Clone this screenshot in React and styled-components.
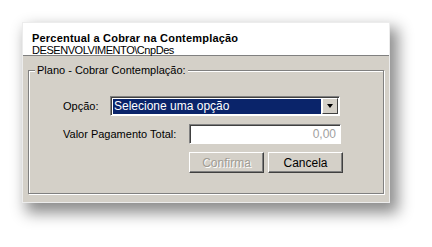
import React from "react";
import styled, { createGlobalStyle } from "styled-components";

const GlobalStyle = createGlobalStyle`
  html, body {
    margin: 0;
    padding: 0;
    background: #ffffff;
    font-family: "Liberation Sans", Arial, sans-serif;
  }
`;

const Page = styled.div`
  width: 432px;
  height: 247px;
  padding: 22px 0 0 22px;
  box-sizing: border-box;
  overflow: hidden;
`;

const Window = styled.div`
  width: 368px;
  height: 181px;
  box-sizing: border-box;
  background: #d4d0c8;
  border: 1px solid #ececec;
  box-shadow: 6px 8px 14px 2px rgba(0, 0, 0, 0.45);
  display: flex;
  flex-direction: column;
`;

const Header = styled.div`
  height: 33px;
  box-sizing: border-box;
  background: #ffffff;
  border-bottom: 1px solid #808080;
  padding: 9px 0 0 9px;
`;

const Title = styled.div`
  font-size: 11px;
  font-weight: bold;
  letter-spacing: 0.2px;
  color: #000;
  line-height: 12px;
`;

const Subtitle = styled.div`
  font-size: 11px;
  letter-spacing: -0.45px;
  color: #000;
  line-height: 12px;
`;

const Body = styled.div`
  flex: 1;
  padding: 8px 5px 8px 5px;
  display: flex;
`;

const Group = styled.fieldset`
  flex: 1;
  margin: 0;
  padding: 20px 0 0 0;
  border: 1px solid #808080;
  box-shadow: inset 1px 1px 0 #ffffff, 1px 1px 0 #ffffff;
  display: flex;
  flex-direction: column;
  gap: 8px;
`;

const Legend = styled.legend`
  font-size: 11px;
  color: #000;
  padding: 0 2px;
  margin-left: 6px;
  background: #d4d0c8;
`;

const Row = styled.div`
  display: flex;
  align-items: center;
  padding-left: ${(p) => 34 + (p.$indent || 0)}px;
  gap: ${(p) => p.$gap || 0}px;
`;

const Label = styled.span`
  width: ${(p) => p.$w}px;
  font-size: 11px;
  color: #000;
`;

const Combo = styled.div`
  width: 230px;
  height: 20px;
  box-sizing: border-box;
  display: flex;
  background: #ffffff;
  border: 1px solid;
  border-color: #808080 #ffffff #ffffff #808080;
  box-shadow: inset 1px 1px 0 #404040;
  padding: 2px 1px 1px 2px;
`;

const ComboText = styled.div`
  flex: 1;
  background: #0a246a;
  color: #ffffff;
  font-size: 12px;
  line-height: 14px;
  padding-left: 1px;
  margin-right: 1px;
`;

const DropButton = styled.div`
  width: 16px;
  box-sizing: border-box;
  margin: -1px 0 0 0;
  background: #d4d0c8;
  border: 1px solid;
  border-color: #ffffff #404040 #404040 #ffffff;
  display: flex;
  align-items: center;
  justify-content: center;
`;

const Arrow = styled.span`
  width: 0;
  height: 0;
  border-left: 3.5px solid transparent;
  border-right: 3.5px solid transparent;
  border-top: 4px solid #000;
`;

const ValueInput = styled.input`
  width: 152px;
  height: 20px;
  box-sizing: border-box;
  margin: 0;
  border: 1px solid;
  border-color: #808080 #ffffff #ffffff #808080;
  box-shadow: inset 1px 1px 0 #404040;
  background: #ffffff;
  color: #a0a0a0;
  font-family: "Liberation Sans", Arial, sans-serif;
  font-size: 12px;
  text-align: right;
  padding: 0 4px 0 0;
  outline: none;
`;

const Button = styled.button`
  width: 75px;
  height: 21px;
  box-sizing: border-box;
  margin: 0;
  padding: 0;
  background: #d4d0c8;
  border: 1px solid;
  border-color: #ffffff #404040 #404040 #ffffff;
  box-shadow: inset -1px -1px 0 #808080;
  font-family: "Liberation Sans", Arial, sans-serif;
  font-size: 12px;
  color: ${(p) => (p.disabled ? "#a09c94" : "#000")};
  text-shadow: ${(p) => (p.disabled ? "1px 1px 0 #ffffff" : "none")};
`;

export default function App() {
  return (
    <>
      <GlobalStyle />
      <Page>
        <Window>
          <Header>
            <Title>Percentual a Cobrar na Contemplação</Title>
            <Subtitle>DESENVOLVIMENTO\CnpDes</Subtitle>
          </Header>
          <Body>
            <Group>
              <Legend>Plano - Cobrar Contemplação:</Legend>
              <Row>
                <Label $w={47}>Opção:</Label>
                <Combo>
                  <ComboText>Selecione uma opção</ComboText>
                  <DropButton>
                    <Arrow />
                  </DropButton>
                </Combo>
              </Row>
              <Row>
                <Label $w={126}>Valor Pagamento Total:</Label>
                <ValueInput readOnly value="0,00" />
              </Row>
              <Row $indent={126} $gap={4}>
                <Button disabled>Confirma</Button>
                <Button>Cancela</Button>
              </Row>
            </Group>
          </Body>
        </Window>
      </Page>
    </>
  );
}
